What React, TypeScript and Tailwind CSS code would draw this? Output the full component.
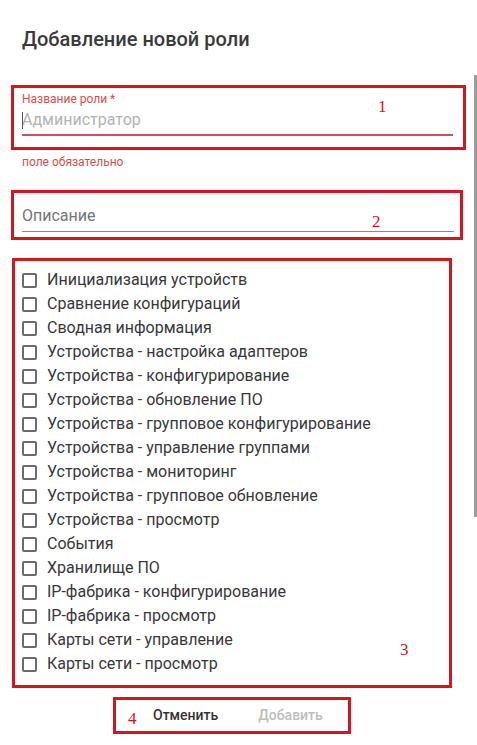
import React from "react";

const permissions = [
  "Инициализация устройств",
  "Сравнение конфигураций",
  "Сводная информация",
  "Устройства - настройка адаптеров",
  "Устройства - конфигурирование",
  "Устройства - обновление ПО",
  "Устройства - групповое конфигурирование",
  "Устройства - управление группами",
  "Устройства - мониторинг",
  "Устройства - групповое обновление",
  "Устройства - просмотр",
  "События",
  "Хранилище ПО",
  "IP-фабрика - конфигурирование",
  "IP-фабрика - просмотр",
  "Карты сети - управление",
  "Карты сети - просмотр",
];

// red annotation numbers drawn over the screenshot
const Mark = ({ n, className }: { n: string; className: string }) => (
  <span
    className={`absolute text-[17px] leading-none text-[#d0161d] ${className}`}
    style={{ fontFamily: '"Liberation Serif", serif' }}
  >
    {n}
  </span>
);

const App = () => {
  return (
    <div
      className="relative w-[477px] h-[745px] bg-white overflow-hidden flex flex-col items-start"
      style={{ fontFamily: "Roboto, sans-serif" }}
    >
      {/* scrollbar thumb */}
      <div className="absolute right-0 top-[75px] w-[3px] h-[442px] bg-[#9a9a9a]" />

      <h2 className="pt-[25px] pl-[22px] text-[20px] leading-7 font-medium text-[#3a3a3a]">
        Добавление новой роли
      </h2>

      {/* 1 */}
      <div className="relative mt-[32px] ml-[11px] w-[455px] h-[65px] border-[3px] border-[#d6151d] pl-2 pr-[10px] pt-[3px] flex flex-col">
        <div className="text-[12px] leading-4 text-[#d64f4b]">Название роли *</div>
        <div className="mt-[3px] relative h-5 text-[16px] leading-5 text-[#b3b3b3] flex items-center">
          <span className="absolute left-0 top-[2px] w-px h-[17px] bg-[#555]" />
          Администратор
        </div>
        <div className="mt-[4px] h-[2px] bg-[#c95552]" />
        <Mark n="1" className="left-[364px] top-[10px]" />
      </div>

      <div className="mt-[4px] pl-[22px] text-[12px] leading-4 text-[#d0504c]">поле обязательно</div>

      {/* 2 */}
      <div className="relative mt-[20px] ml-[11px] w-[452px] h-[50px] border-[3px] border-[#d6151d] pl-2 pr-[6px] pt-[13px] flex flex-col gap-[5px]">
        <div className="h-5 text-[16px] leading-5 text-[#757575]">Описание</div>
        <div className="h-px bg-[#8a8a8a]" />
        <Mark n="2" className="left-[358px] top-[20px]" />
      </div>

      {/* 3 */}
      <div className="relative mt-[18px] ml-[12px] w-[440px] h-[430px] border-[3px] border-[#d6151d] pl-[7px] pt-[7px] flex flex-col">
        {permissions.map((p) => (
          <label key={p} className="flex items-center gap-[10px] h-6 text-[16px] text-[#383838]">
            <span className="w-[15px] h-[15px] border-2 border-[#6b6b6b] rounded-[2px]" />
            {p}
          </label>
        ))}
        <Mark n="3" className="left-[385px] top-[380px]" />
      </div>

      {/* 4 */}
      <div className="relative mt-[9px] ml-[113px] w-[238px] h-[37px] border-[3px] border-[#d6151d] pl-[37px] flex items-center gap-[40px]">
        <Mark n="4" className="left-[12px] top-[10px]" />
        <span className="text-[14px] font-medium text-[#333]">Отменить</span>
        <span className="text-[14px] font-medium text-[#bdbdbd]">Добавить</span>
      </div>
    </div>
  );
};

export default App;
